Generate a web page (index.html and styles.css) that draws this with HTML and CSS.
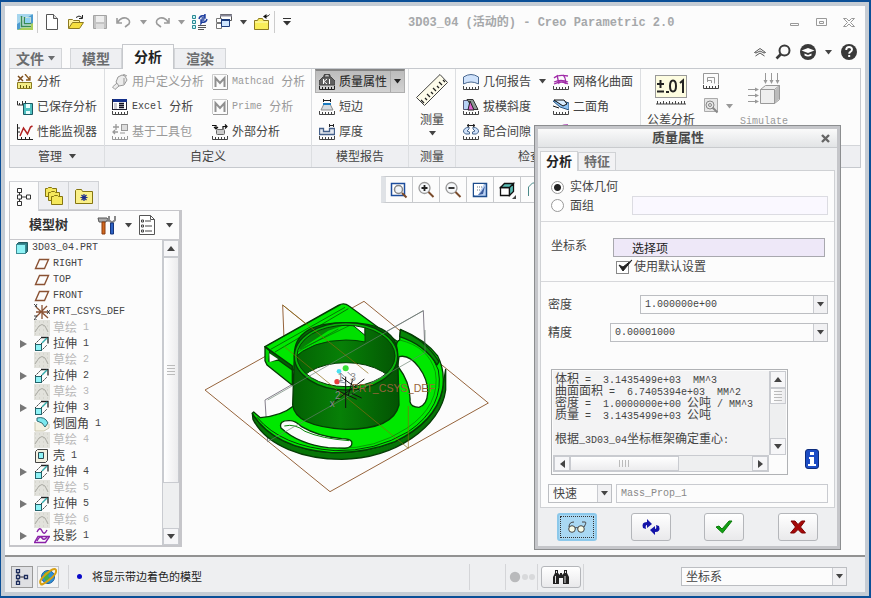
FILE: index.html
```html
<!DOCTYPE html>
<html lang="zh-CN">
<head>
<meta charset="utf-8">
<title>Creo Parametric 2.0</title>
<link rel="stylesheet" href="styles.css">
</head>
<body>
<svg class="defs" aria-hidden="true">
  <symbol id="down" viewBox="0 0 7 5"><path d="M0 0h7L3.500 4.500z" fill="currentColor"/></symbol>
  <symbol id="ticks" viewBox="0 0 16 16"><path d="M.5 12v3.500h15V12M3.500 13v2M6.500 13v2M9.500 13v2M12.500 13v2" fill="none" stroke="currentColor"/></symbol>
  <symbol id="sketch" viewBox="0 0 16 16"><rect width="16" height="16" fill="#e2e2dc"/><path d="M1 2h14M1 6h14M1 10h14M1 14h14" stroke="#c9c9c0" stroke-dasharray="1 3"/><path d="M1 12l4-6q3-3 6 0l3 6" fill="none" stroke="#a9a9a2"/></symbol>
  <symbol id="plane" viewBox="0 0 16 16"><path d="M5.500 3.500h9l-4 9h-9z" fill="none" stroke="#8a5233" stroke-width="1.400"/></symbol>
  <symbol id="extrude" viewBox="0 0 16 16"><path d="M1 8l6-6M7 15l6-6M7 8l6-6" stroke="#333" stroke-dasharray="2 1"/><path d="M7 1.500h7v6" fill="none" stroke="#222" stroke-width="1.300"/><path d="M8 7l5-5" stroke="#3aa" stroke-width="1.500"/><rect x="1.500" y="8.500" width="6" height="6" fill="#8ff3f6" stroke="#24646c"/></symbol>
  <symbol id="mathcad" viewBox="0 0 16 16"><path d="M.5 15V.5H15" fill="none" stroke="#ccc"/><path d="M15.500 1v14.500H1" fill="none" stroke="#999"/><path d="M3.500 13V4L8 9l4.500-5v9" fill="none" stroke="#909090" stroke-width="2"/></symbol>
</svg>

<div class="app">
  <header class="titlebar">
    <div class="quick">
      <button aria-label="Creo"><svg class="i16" viewBox="0 0 16 16"><rect width="16" height="16" rx="1" fill="#4d9bd0"/><path d="M0 0h16L0 10z" fill="#a6d6ee"/><path d="M0 16l16-7v7z" fill="#a9cf5b"/><rect x="3" y="3" width="11" height="11" fill="#e8f7e0" opacity=".7"/><path d="M4.500 2v10.500H14M7.500 3v6.500H14" fill="none" stroke="#378b54" stroke-width="1.500"/><rect x="8" y="4" width="5" height="5" fill="#8fd0f0"/></svg></button>
      <span class="sep"></span>
      <button aria-label="新建"><svg class="i16" viewBox="0 0 16 16"><path d="M2.500.5h7l4 4v11h-11z" fill="#fff" stroke="#555"/><path d="M9.500.5v4h4" fill="#ddd" stroke="#555"/></svg></button>
      <button aria-label="打开"><svg class="i16" viewBox="0 0 16 16"><path d="M.5 14V5.500h4l1 1h6V9" fill="#fff3a0" stroke="#8c7a20"/><path d="M.5 14.500l4-6h11l-4 6z" fill="#f6df3f" stroke="#8c7a20"/><path d="M8 3.500q3-3 6 0M14.500 1v3.500H11" fill="none" stroke="#222"/></svg></button>
      <button aria-label="保存"><svg class="i16" viewBox="0 0 16 16"><path d="M1.500 1.500h13v13h-13z" fill="#c4c4c4" stroke="#a4a4a4"/><rect x="4" y="2" width="8" height="6" fill="#eee"/><rect x="4" y="10" width="8" height="5" fill="#ddd"/></svg></button>
      <button aria-label="撤消"><svg class="i16" viewBox="0 0 16 16"><path d="M1 4v5h5M2 8q3-5 8-4 5 2 3 6l-4 3" fill="none" stroke="#9a9a9a" stroke-width="1.600"/></svg></button>
      <button class="drop pale" aria-label="撤消列表"><svg class="arrow"><use href="#down"/></svg></button>
      <button aria-label="重做"><svg class="i16" viewBox="0 0 16 16"><path d="M15 4v5h-5M14 8q-3-5-8-4-5 2-3 6l4 3" fill="none" stroke="#9a9a9a" stroke-width="1.600"/></svg></button>
      <button class="drop pale" aria-label="重做列表"><svg class="arrow"><use href="#down"/></svg></button>
      <button aria-label="重新生成"><svg class="i16" viewBox="0 0 16 16"><path d="M.5 1.500h3v3h-3zM.5 6.500h3v3h-3zM.5 11.500h3v3h-3z" fill="#c8f4f4" stroke="#2c8a95"/><path d="M6 11.500h8M6 13.500h8M6 15.500h6" stroke="#555"/><path d="M7 5q1-4 5-3l1-1.500V4H9.500M15 5q-1 4-5 3L9 9.500V6h3.500" fill="none" stroke="#1c3c9c" stroke-width="1.400"/></svg></button>
      <button aria-label="窗口"><svg class="i16" viewBox="0 0 16 16"><path d="M4.500.5h11v6h-11z" fill="#fff" stroke="#555"/><path d="M4 1.500h12" stroke="#889" stroke-width="2"/><path d="M.5 9.500h5v5h-5z" fill="#fff" stroke="#777"/><path d="M.5 4.500h5v4h-5z" fill="#fff" stroke="#777"/><path d="M5.500 5.500h8v7h-8z" fill="#cfe6ff" stroke="#1c3c7c"/><path d="M5 6h9" stroke="#1c3c7c" stroke-width="2"/></svg></button>
      <button class="drop" aria-label="窗口列表"><svg class="arrow"><use href="#down"/></svg></button>
      <button aria-label="关闭"><svg class="i16" viewBox="0 0 16 16"><path d="M.5 15.500v-9h3l1-2h4l1 2h5v9z" fill="#f9ee58" stroke="#8c7a20"/><path d="M1 8h13" stroke="#fffbc0"/><path d="M9 2.500L12.500 0v5z" fill="#111"/><path d="M12 2.500q3-.5 3.500-2" fill="none" stroke="#111"/></svg></button>
      <span class="sep"></span>
      <button class="custom" aria-label="自定义快速访问工具栏"><svg viewBox="0 0 8 8" width="8" height="8"><path d="M0 .5h8" stroke="#333"/><path d="M0 3h8L4 7.500z" fill="#333"/></svg></button>
    </div>
    <h1><span class="en">3D03_04 (</span>活动的<span class="en">) - Creo Parametric 2.0</span></h1>
    <div class="winctl">
      <button aria-label="最小化"><svg viewBox="0 0 12 11" width="12" height="11"><path d="M1.500 6.500h8v2h-8z" fill="none" stroke="#999"/></svg></button>
      <button aria-label="最大化"><svg viewBox="0 0 12 11" width="12" height="11"><path d="M.5 1.500h10v7H.5zM3.500 4.500h4v2h-4z" fill="none" stroke="#999"/></svg></button>
      <button aria-label="关闭窗口"><svg viewBox="0 0 12 11" width="12" height="11"><path d="M.5 1.500h3L6 4l2.500-2.500h3L7.500 5.500l4 4h-3L6 7 3.500 9.500h-3l4-4z" fill="none" stroke="#999"/></svg></button>
    </div>
  </header>

  <nav class="tabrow">
    <button class="tab file">文件<svg class="arrow"><use href="#down"/></svg></button>
    <button class="tab">模型</button>
    <button class="tab active">分析</button>
    <button class="tab">渲染</button>
    <div class="utils">
      <button aria-label="最小化功能区"><svg viewBox="0 0 12 10" width="12" height="10"><path d="M.5 5.500l5.500-4 5.500 4-1.500.5-4-2-4 2zM1.500 9L6 6l4.500 3" fill="none" stroke="#555"/></svg></button>
      <button aria-label="搜索"><svg viewBox="0 0 16 16" width="16" height="16"><circle cx="9.500" cy="6.500" r="5" fill="none" stroke="#3a3a3a" stroke-width="2"/><path d="M6 10l-4.500 4.500" stroke="#3a3a3a" stroke-width="2.600"/></svg></button>
      <button aria-label="学习"><svg viewBox="0 0 16 16" width="16" height="16"><circle cx="8" cy="8" r="8" fill="#3a3a3a"/><path d="M1.500 6.500L8 4l6.500 2.500L8 9z" fill="#fff"/><path d="M4.500 9.500v2q3.500 2 7 0v-2L8 11z" fill="#fff"/></svg></button>
      <button aria-label="学习列表"><svg class="arrow"><use href="#down"/></svg></button>
      <button aria-label="帮助"><svg viewBox="0 0 16 16" width="16" height="16"><circle cx="8" cy="8" r="8" fill="#3a3a3a"/><path d="M5.200 6q0-3 2.900-3 2.900 0 2.900 2.600 0 1.500-1.600 2.300-1.200.6-1.200 1.800" fill="none" stroke="#fff" stroke-width="1.900"/><path d="M7.200 11h2v2h-2z" fill="#fff"/></svg></button>
    </div>
  </nav>

  <section class="ribbon">
    <div class="group">
      <div class="cmds">
        <button class="cmd"><svg class="i16" viewBox="0 0 16 16"><path d="M1 2l5 5M6 2L1 7" stroke="#7a4a1a" stroke-width="1.500"/><path d="M8 0l5 6M13 2v4H9" fill="none" stroke="#8a5a20" stroke-width="1.300"/><path d="M.5 8.500h14v6H.5z" fill="#f3ec85" stroke="#8a7a20"/><path d="M3.500 11v3M6.500 12v2M9.500 11v3M12.500 12v2" stroke="#665a10"/></svg>分析</button>
        <button class="cmd"><svg class="i16" viewBox="0 0 16 16"><path d="M.5 2v4h7M2.500 4v2M5.500 2v4M8.500 2v2" fill="none" stroke="#333"/><path d="M6.500 4.500h9v11h-9z" fill="#4fc0c0" stroke="#1c5a64"/><path d="M9 5h4v4H9zM9 12h4v3H9z" fill="#e8ffff"/></svg>已保存分析</button>
        <button class="cmd"><svg class="i16" viewBox="0 0 16 16"><path d="M.5 0v15.500H16M1 4h2M1 8h2M4.500 13v2M8.500 13v2M12.500 13v2" fill="none" stroke="#222"/><path d="M3 12L6.500 4l4 6L13.500 3l2-1" fill="none" stroke="#b02020" stroke-width="1.500"/></svg>性能监视器</button>
      </div>
      <h2>管理<svg class="arrow"><use href="#down"/></svg></h2>
    </div>

    <div class="group">
      <div class="cmds two">
        <button class="cmd off"><svg class="i16" viewBox="0 0 16 16"><path d="M4 8l2-5 4-2 3 1 2 4-3 5-5 1zM5 9l-4.500 4 2.500 2.500L7 12M11 0l4 2M12 4v6" fill="#ececec" stroke="#999"/></svg>用户定义分析</button>
        <button class="cmd off"><svg class="i16"><use href="#mathcad"/></svg><span class="en">Mathcad</span> 分析</button>
        <button class="cmd"><svg class="i16" viewBox="0 0 16 16"><rect x=".5" y=".5" width="14" height="10" fill="#fff" stroke="#223"/><rect x="1" y="0" width="14" height="3" fill="#14308a"/><path d="M7 4.500h5M7 6.500h5M7 8.500h5" stroke="#112" stroke-width="1.500"/><path d="M2 5h3M2 7h3M2 9h3" stroke="#99a"/><use href="#ticks"/></svg><span class="en">Excel</span> 分析</button>
        <button class="cmd off"><svg class="i16"><use href="#mathcad"/></svg><span class="en">Prime</span> 分析</button>
        <button class="cmd off"><svg class="i16" viewBox="0 0 16 16"><path d="M1 3h6M4 0v6M1 8h5M3 6L1 8l2 2" fill="none" stroke="#999" stroke-width="1.300"/><rect x="9.500" y=".5" width="6" height="6" fill="#ddd" stroke="#999"/><path d="M8 9h5" stroke="#999"/><use href="#ticks"/></svg>基于工具包</button>
        <button class="cmd"><svg class="i16" viewBox="0 0 16 16"><path d="M0 1.500h4V5M2 3l2 2 2-2M11 5V2.500h4M13 .5l2 2-2 2" fill="none" stroke="#111" stroke-width="1.200"/><rect x="4.500" y="5.500" width="8" height="5" rx="1" fill="#ccc" stroke="#666"/><use href="#ticks"/></svg>外部分析</button>
      </div>
      <h2>自定义</h2>
    </div>

    <div class="group">
      <div class="cmds snug">
        <div class="split"><button class="cmd"><svg class="i16" viewBox="0 0 16 16"><path d="M5 3q0-3 3-3t3 3" fill="none" stroke="#444" stroke-width="1.500"/><path d="M4 3h8l4 4v4H0V7z" fill="#5f5f5f" stroke="#444"/><path d="M4.500 5v5M8 5L5 7.500 8 10M10.500 5v5" fill="none" stroke="#fff"/><use href="#ticks"/></svg>质量属性</button><button class="more" aria-label="质量属性列表"><svg class="arrow"><use href="#down"/></svg></button></div>
        <button class="cmd"><svg class="i16" viewBox="0 0 16 16"><path d="M4.500 0v3M11.500 0v3M5 1.500h6" stroke="#222"/><path d="M5 5h6l3 6H2z" fill="#d5dbe0" stroke="#888"/><path d="M4 5h8" stroke="#1c7cc0" stroke-width="2"/><use href="#ticks"/></svg>短边</button>
        <button class="cmd"><svg class="i16" viewBox="0 0 16 16"><path d="M10.500 0v3M14.500 0v3M11 1.500h3" stroke="#222"/><path d="M.5 4.500h4v3h6v-3h5v6H.5z" fill="#e4e8ee" stroke="#44608a" stroke-width="1.300"/><use href="#ticks"/></svg>厚度</button>
      </div>
      <h2>模型报告</h2>
    </div>

    <div class="group">
      <div class="cmds big">
        <button class="large"><svg viewBox="0 0 32 32" width="32" height="32"><path d="M.5 23.500L24 .5l7.500 8-23 23z" fill="#fdfbea" stroke="#444"/><path d="M8 29l-3-3M11 26l-2-2M14 23l-3-3M17 20l-2-2M20 17l-3-3M23 14l-2-2M26 11l-3-3M29 8l-2-2" stroke="#222" stroke-width="1.300"/></svg>测量<svg class="arrow"><use href="#down"/></svg></button>
      </div>
      <h2>测量</h2>
    </div>

    <div class="group">
      <div class="cmds inspect">
        <button class="cmd"><svg class="i16" viewBox="0 0 16 16"><path d="M.5 10V3Q8-2 15.500 3v7Q8 6 .5 10z" fill="#cfe2fb" stroke="#4a6890"/><use href="#ticks"/></svg>几何报告<svg class="arrow"><use href="#down"/></svg></button>
        <button class="cmd"><svg class="i16" viewBox="0 0 16 16"><path d="M1 4q4-4 14-2M1 8q7-3 14 0M4 1l2 9M10 1q4 4 2 9M1 10q8-4 14 0" fill="none" stroke="#a02ca8" stroke-width="1.300"/><use href="#ticks"/></svg>网格化曲面</button>
        <button class="cmd"><svg class="i16" viewBox="0 0 16 16"><path d="M.5 1.500h6v9h-6z" fill="#b7d2f5" stroke="#557"/><path d="M4 .5h6l5 10h-4z" fill="#8b9a94" stroke="#333"/><path d="M7 2l4 9H5z" fill="#e060d0" stroke="#222"/><use href="#ticks"/></svg>拔模斜度</button>
        <button class="cmd"><svg class="i16" viewBox="0 0 16 16"><path d="M0 2h10l6 2v7L7 8z" fill="#8fc4f5" stroke="#27527c"/><path d="M1 1h10l3 4-4 2zM0 7l6 2" fill="#d8edff" stroke="#111"/><use href="#ticks"/></svg>二面角</button>
        <button class="cmd"><svg class="i16" viewBox="0 0 16 16"><path d="M6 3q-6 1-5.500 5 1 3 6 2V8L4 7l2-2zM10 3q6 1 5.500 5-1 3-6 2V8l2.500-1-2-2z" fill="#cfe2fb" stroke="#4a6890"/><path d="M4 1.500h8M6 0L4 1.500 6 3M10 0l2 1.500L10 3" fill="none" stroke="#222"/><use href="#ticks"/></svg>配合间隙</button>
        <button class="cmd" aria-label="曲率"><svg class="i16" viewBox="0 0 16 16"><path d="M1 6q6-5 14-5" fill="none" stroke="#a02ca8" stroke-width="1.500"/></svg></button>
      </div>
      <h2 class="left">检查</h2>
    </div>

    <div class="group last">
      <div class="cmds tools">
        <button class="large"><svg viewBox="0 0 32 32" width="32" height="32"><rect x=".5" y="2.500" width="31" height="22" fill="#fdfce0" stroke="#999"/><path d="M2 11h7M5.500 7v8M2 18.500h7M11 19h3M18 7.500q-3 0-3 5.500t3 5.500 3-5.500-3-5.500M25 10l3-2.500V20" fill="none" stroke="#222" stroke-width="2"/><path d="M1 31h30M2.500 28v3M5.500 29v2M8.500 28v3M11.500 29v2M14.500 28v3M17.500 29v2M20.500 28v3M23.500 29v2M26.500 28v3M29.500 28v3" stroke="#444"/></svg>公差分析</button>
        <div class="minis">
          <button aria-label="灵敏度"><svg class="i16" viewBox="0 0 16 16"><path d="M.5 11V.5h15v11M4.500 9V4.500h7v6M8.500 10V7.500h-4" fill="none" stroke="#999"/><use href="#ticks"/></svg></button>
          <button aria-label="优化"><svg class="i16" viewBox="0 0 16 16"><path d="M1.500.5h13v13h-13z" fill="#e6e6e6" stroke="#aaa"/><circle cx="7" cy="7" r="4" fill="none" stroke="#888"/><circle cx="7" cy="7" r="1.500" fill="none" stroke="#888"/><path d="M9.500 9.500l5 5" stroke="#888" stroke-width="2"/></svg></button>
          <button class="pale" aria-label="优化列表"><svg class="arrow"><use href="#down"/></svg></button>
        </div>
        <button class="large off"><svg viewBox="0 0 32 34" width="32" height="34"><path d="M12.500 16.500h14v14h-14zM12.500 16.500l5-4h14l-5 4M31.500 12.500v14l-5 4z" fill="#eee" stroke="#999"/><path d="M27 17l4-4v13l-4 4z" fill="#bbb"/><path d="M17.500 0v9M23.500 0v9M29.500 0v9M0 16.500h9M0 22.500h9M0 28.500h9" stroke="#999"/><path d="M15.500 7h4l-2 4zM21.500 7h4l-2 4zM27.500 7h4l-2 4zM7 14.500v4l4-2zM7 20.500v4l4-2zM7 26.500v4l4-2z" fill="#999"/></svg><span class="en">Simulate</span></button>
      </div>
      <h2></h2>
    </div>
  </section>

  <main class="work">
    <aside class="side">
      <div class="sidetabs">
        <button class="on" aria-label="模型树"><svg viewBox="0 0 16 20" width="16" height="20"><path d="M3.500 5v10M5 10h6" stroke="#333"/><path d="M1.500 1.500h4v4h-4zM1.500 8h4v4h-4zM1.500 14.500h4v4h-4zM10.500 8h4v4h-4z" fill="#fff" stroke="#333"/></svg></button>
        <button aria-label="文件夹浏览器"><svg viewBox="0 0 20 20" width="20" height="20"><path id="fold" d="M1.500 10.500v-8h2l1-1h3l1 1h4v8z" fill="#f5e85c" stroke="#857510"/><use href="#fold" x="3" y="4"/><use href="#fold" x="6" y="8"/></svg></button>
        <button aria-label="收藏夹"><svg viewBox="0 0 18 16" width="18" height="16"><path d="M.5 15.500v-13l1-1h5l1 2h10v12z" fill="#faf088" stroke="#857510"/><path d="M9 6v7M5.500 9.500h7M6.500 7l5 5M11.500 7l-5 5" stroke="#1c2c8c" stroke-width="1.200"/></svg></button>
      </div>
      <div class="treebox">
        <div class="treehead">
          <h3>模型树</h3>
          <button aria-label="设置"><svg viewBox="0 0 20 20" width="20" height="20"><path d="M1 3h9l2 3H9v1H2z" fill="#aaa" stroke="#555"/><path d="M5 7h3v12H5z" fill="#d2691e" stroke="#8a3c10"/><path d="M12 1v4l2 2h2l2-2V1" fill="none" stroke="#888" stroke-width="2"/><path d="M13.500 8h3v11h-3z" fill="#2d62c4" stroke="#16357c"/></svg></button>
          <button aria-label="设置列表"><svg class="arrow"><use href="#down"/></svg></button>
          <button aria-label="显示"><svg viewBox="0 0 16 20" width="16" height="20"><path d="M.5.5h11l4 4v15H.5z" fill="#fff" stroke="#555"/><path d="M11.500.5v4h4" fill="none" stroke="#555"/><path d="M6 6h6M6 11h7M6 16h7" stroke="#444"/><path d="M2.500 5h2v2h-2zM2.500 10h2v2h-2zM2.500 15h2v2h-2z" fill="none" stroke="#444"/></svg></button>
          <button aria-label="显示列表"><svg class="arrow"><use href="#down"/></svg></button>
        </div>
        <div class="treebody">
          <ul>
            <li class="root"><svg class="i14" viewBox="0 0 14 14"><path d="M1.500 3.500l2-2h9v9l-2 2h-9z" fill="#2c7c84" stroke="#245a60"/><path d="M1.500 3.500h9v9h-9z" fill="#8ff3f6" stroke="#3c8c94"/></svg><span class="en">3D03_04.PRT</span></li>
            <li><svg class="i16"><use href="#plane"/></svg><span class="en">RIGHT</span></li>
            <li><svg class="i16"><use href="#plane"/></svg><span class="en">TOP</span></li>
            <li><svg class="i16"><use href="#plane"/></svg><span class="en">FRONT</span></li>
            <li><svg class="i16" viewBox="0 0 16 16"><path d="M8 1v14M2 3l12 11M13 2L2 13M2 8h13" stroke="#8a5233" stroke-width="1.300"/><path d="M0 0l3 3M3 0L1 3M13 6l3 4M16 6l-3 4M0 12h3l-3 4h3" fill="none" stroke="#444"/></svg><span class="en">PRT_CSYS_DEF</span></li>
            <li class="off"><svg class="i16"><use href="#sketch"/></svg>草绘 <span class="en">&nbsp;1</span></li>
            <li class="kids"><svg class="i16"><use href="#extrude"/></svg>拉伸 <span class="en">&nbsp;1</span></li>
            <li class="off"><svg class="i16"><use href="#sketch"/></svg>草绘 <span class="en">&nbsp;2</span></li>
            <li class="kids"><svg class="i16"><use href="#extrude"/></svg>拉伸 <span class="en">&nbsp;2</span></li>
            <li class="off"><svg class="i16"><use href="#sketch"/></svg>草绘 <span class="en">&nbsp;3</span></li>
            <li class="kids"><svg class="i16"><use href="#extrude"/></svg>拉伸 <span class="en">&nbsp;3</span></li>
            <li><svg class="i16" viewBox="0 0 16 16"><path d="M1 6v9h9l5-3V8" fill="#f3f1e2" stroke="#ccc8b0"/><path d="M3 2q8-2 11 5l-3 4Q9 6 3 5z" fill="#7ce8ee" stroke="#2c6c74"/></svg>倒圆角 <span class="en">&nbsp;1</span></li>
            <li class="off"><svg class="i16"><use href="#sketch"/></svg>草绘 <span class="en">&nbsp;4</span></li>
            <li><svg class="i16" viewBox="0 0 16 16"><path d="M1.500 3.500l2-2h10v11l-2 2h-10z" fill="#f3f1e2" stroke="#444"/><path d="M4.500 4.500h5v6h-5z" fill="#8ff3f6" stroke="#2c4c54"/></svg>壳 <span class="en">&nbsp;1</span></li>
            <li class="kids"><svg class="i16"><use href="#extrude"/></svg>拉伸 <span class="en">&nbsp;4</span></li>
            <li class="off"><svg class="i16"><use href="#sketch"/></svg>草绘 <span class="en">&nbsp;5</span></li>
            <li class="kids"><svg class="i16"><use href="#extrude"/></svg>拉伸 <span class="en">&nbsp;5</span></li>
            <li class="off"><svg class="i16"><use href="#sketch"/></svg>草绘 <span class="en">&nbsp;6</span></li>
            <li class="kids"><svg class="i16" viewBox="0 0 16 16"><path d="M3 4q3-6 5-1t5-1M4 8.500h11.500l-4 6H.5zM3 13q3-6 5-3t5-1" fill="none" stroke="#8a22a8" stroke-width="1.400"/></svg>投影 <span class="en">&nbsp;1</span></li>
          </ul>
          <div class="vbar"><span class="cap up"></span><span class="thumb tall"><i></i></span><span class="cap down"></span></div>
        </div>
      </div>
    </aside>

    <section class="view">
      <div class="viewbar">
        <button aria-label="重新调整"><svg viewBox="0 0 18 18" width="18" height="18"><path d="M1.500 14.500v-12h13v12z" fill="#fff" stroke="#1c4c9c" stroke-width="1.500"/><circle cx="8.500" cy="8.500" r="4" fill="#f2f6fa" stroke="#888" stroke-width="1.500"/><path d="M12 12l4.500 4.500" stroke="#7a4a2a" stroke-width="2"/></svg></button>
        <button aria-label="放大"><svg viewBox="0 0 18 18" width="18" height="18"><circle cx="7.500" cy="7" r="5.500" fill="#f6f8fa" stroke="#999" stroke-width="1.300"/><path d="M11.500 11l5 5" stroke="#7a4a2a" stroke-width="2"/><path d="M4.500 7h6M7.500 4v6" stroke="#222" stroke-width="1.800"/></svg></button>
        <button aria-label="缩小"><svg viewBox="0 0 18 18" width="18" height="18"><circle cx="7.500" cy="7" r="5.500" fill="#f6f8fa" stroke="#999" stroke-width="1.300"/><path d="M11.500 11l5 5" stroke="#7a4a2a" stroke-width="2"/><path d="M4.500 7h6" stroke="#222" stroke-width="1.800"/></svg></button>
        <button aria-label="重画"><svg viewBox="0 0 18 18" width="18" height="18"><path d="M2.500 2.500h13v13h-13z" fill="#b9d0f2" stroke="#1c4c8c" stroke-width="1.500"/><path d="M3 3h10l-6 11H3z" fill="#fff"/><path d="M14 5l-4 6-3 3 5-1z" fill="#3c5c9c"/><path d="M6 6h5M6 9h3" stroke="#678" stroke-dasharray="1 1"/></svg></button>
        <button aria-label="显示样式"><svg viewBox="0 0 18 18" width="18" height="18"><path d="M2.500 6.500h9v8h-9z" fill="#fff" stroke="#111" stroke-width="1.300"/><path d="M2.500 6.500l4-4h9l-4 4zM15.500 2.500v8l-4 4v-8z" fill="#59bdb4" stroke="#111" stroke-width="1.300"/><path d="M18 14v4h-4z" fill="#444"/></svg></button>
        <button aria-label="已保存方向"><svg viewBox="0 0 18 18" width="18" height="18"><path d="M3.500 15V6l4-4h8" fill="none" stroke="#4b8a8a"/></svg></button>
      </div>
      <svg class="model" viewBox="0 0 900 630" width="300" height="210">
        <defs>
          <linearGradient id="wall"><stop offset="0" stop-color="#036003"/><stop offset=".45" stop-color="#078007"/><stop offset="1" stop-color="#035303"/></linearGradient>
          <clipPath id="hole"><ellipse cx="453" cy="198" rx="147" ry="92"/></clipPath>
        </defs>
        <path d="M30 300L507 34 880 339 405 605z" fill="none" stroke="#96643c" stroke-width="3"/>
        <path d="M263 45l5 125M263 45l160 130" fill="none" stroke="#96643c" stroke-width="3"/>
        <path d="M685 62l5 126M685 62L520 155M218 455L210 330l80-46" fill="none" stroke="#85808c" stroke-width="3"/>
        <g stroke="#053b05" stroke-width="4" stroke-linejoin="round">
          <path d="M172 370L174 388C215 470 330 508 440 508 600 506 738 410 752 300V238L742 300Q722 395 600 455 510 490 410 488 235 474 172 370z" fill="#067506"/>
          <path fill-rule="evenodd" d="M176 366L196 383Q262 376 292 350L420 250 600 200 606 155 614 150 616 118Q690 148 728 198Q752 245 742 300Q722 395 600 455Q510 490 410 488Q235 474 172 370zM612 200Q642 192 672 232Q700 270 698 310Q696 345 672 352Q648 352 645 335Q648 280 608 228zM286 392Q250 390 258 414Q310 462 400 473L450 475Q474 473 470 455Q464 446 440 446Q370 440 320 410Q300 392 286 392z" fill="#00e800"/>
          <path d="M268 408Q300 400 330 424 380 446 462 452" fill="none" stroke="#078507" stroke-width="3"/>
          <path d="M617 128Q705 165 730 240Q750 350 640 425Q540 485 420 482Q260 470 186 382" fill="none" stroke-width="3"/>
          <path d="M614 150Q700 170 721 245Q738 345 635 415Q540 478 430 474" fill="none" stroke="#077507" stroke-width="2"/>
          <path d="M617 120Q692 150 732 215L726 225Q690 165 614 140z" fill="#078507"/>
          <path d="M210 170L430 46Q447 36 462 48L608 155 560 210 294 240z" fill="#00e800"/>
          <path d="M218 166L438 44M240 186L460 56M227 178L450 52" fill="none" stroke-width="2"/>
          <path d="M210 170L292 236V286L216 225 210 212z" fill="#00da00"/>
          <path d="M210 170L224 182 222 214 250 210 292 240 292 228z" fill="#045c04"/>
          <path d="M223 190L250 208 224 216z" fill="#fcfcfc" stroke="none"/>
        </g>
        <path d="M298 195Q298 98 453 98 608 98 608 195L612 345Q595 418 453 418 300 410 293 345z" fill="url(#wall)" stroke="#053b05" stroke-width="4"/>
        <ellipse cx="453" cy="199" rx="155" ry="101" fill="#07b407" stroke="#053b05" stroke-width="4"/>
        <g clip-path="url(#hole)">
          <path d="M290 90h330v220H290z" fill="#00e000"/>
          <path d="M320 150Q390 100 470 98L400 122 312 180z" fill="#078007"/>
          <path d="M474 106h36v30z" fill="#fcfcfc" stroke="#053b05" stroke-width="3"/>
          <path d="M290 210Q350 150 453 150 485 150 510 156V100H620V320H290z" fill="url(#wall)" stroke="#053b05" stroke-width="3"/>
          <ellipse cx="453" cy="310" rx="155" ry="92" fill="#fcfcfc" stroke="#053b05" stroke-width="3"/>
          <path d="M300 190l130-73M315 178l150-72" stroke="#076007" stroke-width="2"/>
        </g>
        <ellipse cx="453" cy="198" rx="147" ry="92" fill="none" stroke="#053b05" stroke-width="3"/>
        <path d="M268 170L640 475V348M263 45L520 250" fill="none" stroke="#8a6a10" stroke-width="2"/>
        <path d="M685 62L218 330M690 188L218 455M690 188V120" fill="none" stroke="#68806e" stroke-width="2"/>
        <path d="M452 260v94M405 345l103-78M425 300l60 28M470 310l30 14M440 262l55 40M474 265l-14 50" stroke="#111" stroke-width="3"/>
        <circle cx="452" cy="235" r="9" fill="#38e038"/><circle cx="432" cy="244" r="7" fill="#48e0f0"/><circle cx="426" cy="275" r="8" fill="#e83c3c"/>
        <path d="M458 246l12 12M437 249l12 12M432 275l20 4" stroke="#789" stroke-width="3"/>
        <g class="axis"><text x="428" y="272">1</text><text x="466" y="272">3</text><text x="420" y="328">2</text><text x="404" y="352">x</text></g>
        <text class="csys" x="470" y="307">PRT_CSYS_DEF</text>
      </svg>
    </section>
  </main>

  <footer class="status">
    <button class="sq on" aria-label="导航器"><svg viewBox="0 0 14 16" width="14" height="16"><path d="M3 3v10M4 8h7" stroke="#223"/><path d="M1.500.5h3v3h-3zM1.500 6.500h3v3h-3zM1.500 12.500h3v3h-3zM9.500 6.500h3v3h-3z" fill="#fff" stroke="#1c2c5c" stroke-width="1.300"/></svg></button>
    <button class="sq" aria-label="浏览器"><svg viewBox="0 0 18 18" width="18" height="18"><circle cx="9" cy="9" r="6.500" fill="#2d8fd8" stroke="#1c5c9c"/><path d="M5 5q4-3 6 0l-2 3 3 3-4 4-3-5z" fill="#46b048"/><path d="M2 16Q-1 13 7 6T17 2q1 4-7 10T2 16z" fill="none" stroke="#d8a012" stroke-width="2"/></svg></button>
    <span class="msg"><i class="dot"></i>将显示带边着色的模型</span>
    <span class="cell"></span>
    <span class="cell lamps"><svg viewBox="0 0 28 12" width="28" height="12"><circle cx="6" cy="6" r="5.200" fill="#b9babc"/><circle cx="16" cy="6" r="3" fill="#d8d9db"/><circle cx="23" cy="6" r="3" fill="#d8d9db"/></svg></span>
    <span class="cell find"><button class="btn" aria-label="查找"><svg viewBox="0 0 18 16" width="18" height="16"><path d="M3 1h3v3l2 2V4h2v2l2-2V1h3v3l2 4v7h-6V9H7v6H1V8l2-4z" fill="#222"/><path d="M3.500 7v7M13 7v7M4.500 2v2M13.500 2v2" stroke="#ddd"/></svg></button></span>
    <div class="combo filter"><select aria-label="选择过滤器"><option>坐标系</option></select><span class="knob"><svg class="arrow"><use href="#down"/></svg></span></div>
  </footer>

  <section class="dialog" role="dialog" aria-labelledby="dlgname">
    <header><h2 id="dlgname">质量属性</h2><button aria-label="关闭对话框"><svg viewBox="0 0 9 9" width="9" height="9"><path d="M1 1l7 7M8 1L1 8" stroke="#666" stroke-width="2.400"/></svg></button></header>
    <div class="dtabs"><button class="on">分析</button><button>特征</button></div>
    <div class="panel">
      <div class="block kind">
        <label><input type="radio" name="kind" checked>实体几何</label>
        <div class="row"><label><input type="radio" name="kind">面组</label><input class="field faint" type="text" aria-label="面组"></div>
      </div>
      <div class="block ref">
        <label for="csys">坐标系</label>
        <div><input id="csys" class="field pick" type="text" value="选择项"><label class="check"><input type="checkbox" checked><svg viewBox="0 0 16 14" width="16" height="14"><path d="M2 6l4 6L15 1 6 8z" fill="#222" stroke="#222"/></svg>使用默认设置</label></div>
      </div>
      <div class="row dens"><label for="dens">密度</label><div class="combo"><select id="dens" class="en"><option>1.000000e+00</option></select><span class="knob"><svg class="arrow"><use href="#down"/></svg></span></div></div>
      <div class="row prec"><label for="prec">精度</label><div class="combo"><select id="prec" class="en"><option>0.00001000</option></select><span class="knob"><svg class="arrow"><use href="#down"/></svg></span></div></div>
      <div class="row out">
        <div class="result">
          <div class="resbody">
            <pre>体积<span class="en"> =  3.1435499e+03  MM^3</span>
曲面面积<span class="en"> =  6.7405394e+03  MM^2</span>
密度<span class="en"> =  1.0000000e+00 </span>公吨<span class="en"> / MM^3</span>
质量<span class="en"> =  3.1435499e+03 </span>公吨

根据<span class="en">_3D03_04</span>坐标框架确定重心<span class="en">:</span></pre>
            <div class="vbar"><span class="cap up"></span><span class="thumb short"><i></i></span><span class="cap down"></span></div>
          </div>
          <div class="hbar"><span class="cap prev"></span><span class="thumb"><i></i></span><span class="cap next"></span></div>
        </div>
        <button class="info" aria-label="信息"><svg viewBox="0 0 14 20" width="14" height="20"><rect x=".5" y=".5" width="13" height="19" rx="2.500" fill="#1c4cc4" stroke="#0c2c7c"/><path d="M5 3h4v3H5zM4 8h5v7h2v2H3v-2h2v-5H4z" fill="#fff"/></svg></button>
      </div>
      <div class="row name">
        <div class="combo mode"><select aria-label="模式"><option>快速</option></select><span class="knob"><svg class="arrow"><use href="#down"/></svg></span></div>
        <input class="field en" type="text" value="Mass_Prop_1" aria-label="名称">
      </div>
    </div>
    <div class="actions">
      <button class="btn focus" aria-label="预览"><svg viewBox="0 0 20 12" width="20" height="12"><circle cx="5" cy="8" r="3.300" fill="#f6fce8" stroke="#444"/><circle cx="14" cy="8" r="3.300" fill="#f6fce8" stroke="#444"/><path d="M8 7q1.500-1 3 0M2 6q0-5 5-5M17 6q3-5 1-5h-3" fill="none" stroke="#444"/></svg></button>
      <button class="btn" aria-label="重复"><svg viewBox="0 0 20 16" width="20" height="16"><path d="M2 9Q0 3 6 3V0l5 5-5 4V6Q4 6 5 10zM18 7q2 6-4 6v3l-5-5 5-4v3q2 0 1-4z" fill="#1212a8"/></svg></button>
      <button class="btn" aria-label="确定"><svg viewBox="0 0 18 14" width="18" height="14"><path d="M1 7l3-1 3 3 7-8h3L7.500 13z" fill="#12a012" stroke="#0a7a0a"/></svg></button>
      <button class="btn" aria-label="取消"><svg viewBox="0 0 16 14" width="16" height="14"><path d="M1 1h4l3 3.500L11.500 1H15l-4.500 6 5 6h-4L8 9.500 4.500 13h-4l5-6z" fill="#a80808" stroke="#7a0000"/></svg></button>
    </div>
  </section>
</div>
</body>
</html>
```
FILE: styles.css
```css
* { box-sizing: border-box; }

body {
  margin: 0;
  border: solid #0b4f97;
  border-width: 2px 2px 2px 1px;
  background: #0b4f97;
  color: #444;
  font: 12px/16px "Liberation Sans", "Noto Sans CJK SC", sans-serif;
}

h1, h2, h3, ul, pre { margin: 0; padding: 0; font-size: 12px; }

button {
  padding: 0;
  border: 0;
  background: none;
  color: inherit;
  font: inherit;
  display: flex;
  align-items: center;
  justify-content: center;
}

input, select { font: inherit; color: inherit; margin: 0; border-radius: 0; }
svg { display: block; flex: none; }
.defs { position: absolute; width: 0; height: 0; }
.en { font-family: "Liberation Mono", "Noto Sans CJK SC", monospace; font-size: 10px; }
.i16 { width: 16px; height: 16px; }
.i14 { width: 14px; height: 14px; }
.arrow { width: 7px; height: 5px; }
.pale { color: #999; }
.off { color: #999; }

.app {
  position: relative;
  min-height: calc(100vh - 4px);
  display: flex;
  flex-direction: column;
  border: 4px solid #c5ccd4;
  background: #fcfcfc;
}

/* Title bar */
.titlebar {
  display: grid;
  grid-template-columns: 395px 1fr auto;
  align-items: center;
  height: 38px;
  padding: 0 8px 6px;
}
.quick { display: flex; align-items: center; height: 24px; }
.quick button { width: 24px; height: 24px; }
.quick .drop { width: 14px; }
.quick .sep { width: 1px; height: 22px; margin-right: 2px; background: #ccc; }
.quick .custom { width: 20px; }
.titlebar h1 { color: #a6a8aa; font-weight: bold; white-space: pre; }
.titlebar h1 .en { font-size: 12px; }
.winctl { display: flex; gap: 15px; padding-right: 2px; }

/* Ribbon tabs */
.tabrow { display: flex; align-items: flex-end; height: 24px; padding: 0 4px; }
.tab {
  width: 52px;
  height: 20px;
  border: 1px solid #d3d5d8;
  border-bottom: 0;
  background: #eeeff2;
  color: #6a6c6e;
  font-size: 14px;
  font-weight: bold;
}
.tab.file { width: 53px; gap: 4px; margin-right: 8px; }
.tab.active { height: 25px; margin-bottom: -1px; background: #fcfcfc; color: #222; border-color: #c6c8cc; z-index: 1; }
.utils { display: flex; align-items: center; gap: 9px; height: 16px; margin: 0 4px 0 auto; align-self: flex-start; }

/* Ribbon */
.ribbon {
  display: grid;
  grid-template-columns: 95px 207px 97px 47px 185px 1fr;
  margin: 0 4px;
  height: 100px;
  border: 1px solid #c6c9ce;
}
.group { display: flex; flex-direction: column; border-right: 1px solid #dcdee1; min-width: 0; }
.group.last { border-right: 0; }
.group h2 {
  display: flex;
  align-items: center;
  justify-content: center;
  gap: 7px;
  height: 22px;
  border-top: 1px solid #d3d5d9;
  background: #eeeff2;
  font-weight: normal;
}
.group h2.left { justify-content: flex-start; padding-left: 62px; }
.cmds { flex: 1; display: grid; grid-auto-rows: 25px; padding-left: 7px; align-content: start; }
.cmds.two { grid-template-columns: 100px 1fr; }
.cmds.snug { padding-left: 3px; }
.cmds.snug > .cmd { padding-left: 4px; }
.cmds.inspect { grid-template-columns: 90px 1fr; }
.cmd { justify-content: flex-start; gap: 4px; white-space: pre; }
.cmd .arrow { margin-left: 4px; }
.split {
  display: flex;
  width: 90px;
  height: 24px;
  border: 1px solid #aeaeae;
  border-top: 2px solid #858585;
  background: linear-gradient(#bcbcbc, #d2d2d2);
  color: #222;
}
.split .cmd { flex: 1; padding-left: 3px; }
.split .more { width: 14px; border-left: 1px solid #aaa; }
.cmds.big { display: block; padding: 5px 0 0; }
.large { flex-direction: column; gap: 7px; width: 48px; }
.cmds.big .large { width: 46px; gap: 6px; }
.large .arrow { margin-top: -3px; }
.cmds.tools { display: flex; gap: 8px; align-items: flex-start; padding: 4px 0 0 6px; }
.minis { display: grid; grid-template-columns: 16px 12px; gap: 9px 4px; width: 29px; }
.minis button:nth-child(2) { grid-row: 2; }
.minis button:nth-child(3) { grid-row: 2; }

/* Work area */
.work { flex: 1; display: flex; min-height: 0; }
.side { width: 173px; margin: 13px 0 8px 4px; display: flex; flex-direction: column; }
.sidetabs { display: flex; height: 30px; margin-bottom: -1px; z-index: 1; }
.sidetabs button { width: 30px; height: 29px; border: 1px solid #d0d2d6; border-left: 0; background: #eeeff2; }
.sidetabs .on { height: 30px; border-left: 1px solid #c8c8cc; border-bottom: 0; background: #fcfcfc; }
.treebox { border: 1px solid #c6c6ca; border-width: 1px 3px 2px 1px; }
.treehead { display: flex; align-items: center; height: 29px; border-bottom: 1px solid #c8c8cc; padding-left: 19px; }
.treehead h3 { flex: 1; font-size: 13px; color: #333; }
.treehead button:nth-of-type(2) { width: 22px; }
.treehead button:nth-of-type(4) { width: 20px; margin-left: 4px; }
.treebody { display: flex; height: 305px; overflow: hidden; }
.treebody ul { flex: 1; list-style: none; }
.treebody li { position: relative; display: flex; align-items: center; height: 16px; padding-left: 24px; white-space: nowrap; }
.treebody li svg { margin-right: 3px; }
.treebody li.root { padding-left: 5px; }
.treebody li.off { color: #b7b7b7; }
.kids::before { content: ""; position: absolute; left: 10px; border: 4px solid transparent; border-left: 7px solid #777; border-right: 0; }

/* Scroll bars */
.vbar { width: 17px; display: flex; flex-direction: column; background: #eeeff0; border-left: 1px solid #c9cbd0; }
.hbar { display: flex; width: 216px; height: 17px; background: #eeeff0; border: 1px solid #c9cbd0; }
.cap { display: grid; place-items: center; height: 17px; width: 16px; background: #f6f6f8; border: 1px solid #c9cbd0; }
.hbar .cap { height: 15px; }
.cap::before { content: ""; border: 4px solid transparent; }
.cap.up::before { border-bottom: 5px solid #444; border-top: 0; }
.cap.down::before { border-top: 5px solid #444; border-bottom: 0; }
.cap.prev::before { border-right: 5px solid #444; border-left: 0; }
.cap.next::before { border-left: 5px solid #444; border-right: 0; }
.cap.down { margin-top: auto; }
.cap.next { margin-left: auto; }
.thumb { display: grid; place-items: center; border: 1px solid #c9cbd0; background: linear-gradient(90deg, #fff, #ececee); }
.thumb.tall { height: 226px; }
.thumb.short { height: 16px; }
.vbar .thumb i { width: 8px; height: 11px; background: repeating-linear-gradient(#bbb 0 1px, transparent 1px 3px); }
.hbar .thumb { width: 109px; background: linear-gradient(#fff, #ececee); }
.hbar .thumb i { width: 11px; height: 7px; background: repeating-linear-gradient(90deg, #bbb 0 1px, transparent 1px 3px); }

/* Graphics area */
.view { flex: 1; padding: 8px 0 0 13px; min-width: 0; }
.viewbar { display: flex; width: 170px; height: 27px; margin-left: 186px; border: 1px solid #c8cacd; border-left: 5px solid #dfe2e6; }
.viewbar button { width: 27px; border-right: 1px solid #c8cacd; }
.model { margin-top: 87px; }
.axis { fill: #888; font: 30px "Liberation Sans", sans-serif; }
.csys { fill: #96643c; font: 32px "Liberation Sans", sans-serif; }

/* Status bar */
.status {
  display: flex;
  align-items: center;
  height: 37px;
  padding: 4px 18px 0 6px;
  border-top: 2px solid #929292;
  background: #eeeff1;
}
.sq { width: 22px; height: 22px; margin-right: 4px; border: 1px solid #c2c4c8; background: #f4f4f4; }
.sq.on { border-color: #999; background: #dfe0e3; }
.msg { display: flex; align-items: center; flex: 1; height: 24px; margin-left: 5px; padding-left: 8px; border-left: 1px solid #d4d5d8; font-size: 11px; color: #222; }
.dot { width: 5px; height: 5px; margin-right: 10px; border-radius: 50%; background: #0808c8; }
.cell { display: flex; align-items: center; width: 36px; height: 26px; border-left: 1px solid #d4d5d8; }
.cell.lamps { width: 32px; padding-left: 3px; }
.cell.find { width: 47px; padding-left: 3px; border-right: 1px solid #d4d5d8; margin-right: 97px; }
.btn { width: 40px; height: 28px; border: 1px solid #b4b6ba; border-radius: 3px; background: linear-gradient(#fff, #e9e9eb); }
.find .btn { height: 22px; }

.combo { display: flex; height: 19px; border: 1px solid #bcbec2; background: #fcfcfc; }
.combo select { flex: 1; min-width: 0; padding: 0 4px; border: 0; background: none; appearance: none; }
.combo select.en, .field.en { font-size: 10px; }
.knob { display: grid; place-items: center; width: 14px; border-left: 1px solid #c9cbd0; background: #f1f1f3; pointer-events: none; }
.filter { width: 166px; }

/* Mass properties dialog */
.dialog {
  position: absolute;
  top: 119px;
  right: 24px;
  width: 307px;
  padding: 3px;
  border: 1px solid #8c8e90;
  background: #eeeff1;
  box-shadow: inset 0 0 0 3px #c5c6ca;
}
.dialog header { display: flex; align-items: center; height: 19px; padding: 0 7px; border-bottom: 1px solid #c9cbce; background: linear-gradient(#fafafa, #e2e4e6); }
.dialog header h2 { flex: 1; padding-right: 10px; text-align: center; font-size: 13px; color: #4a4a4a; }
.dtabs { display: flex; align-items: flex-end; height: 22px; padding-left: 2px; }
.dtabs button { width: 38px; height: 18px; border: 1px solid #d0d2d5; border-bottom: 0; background: #f2f2f4; font-size: 13px; font-weight: bold; color: #6c6c6c; }
.dtabs .on { height: 20px; margin-bottom: -1px; background: #fcfcfc; color: #222; z-index: 1; }
.panel { height: 338px; margin: 0 2px; border: 1px solid #cfd1d4; background: #fcfcfc; }
.row { display: flex; align-items: center; }
.block { border-bottom: 1px solid #d7d8db; }
.kind { height: 51px; padding: 7px 6px 0 10px; }
.kind label { display: flex; align-items: center; height: 18px; gap: 6px; }
.kind input[type=radio] { appearance: none; width: 13px; height: 13px; border: 1px solid #999; border-radius: 50%; background: #fff; }
.kind input[type=radio]:checked { background: radial-gradient(#222 0 3px, #fff 4px); }
.kind .field { width: 196px; margin-left: auto; }
.field { height: 19px; padding: 0 4px; border: 1px solid #c9cbd0; background: #fcfcfc; min-width: 0; outline: 0; }
.field.faint { border-color: #dcdce2; background: #faf8ff; }
.field.pick { display: block; width: 212px; padding-left: 18px; border-color: #a8a8ae; background: #eee8f8; color: #222; }
.ref { display: flex; justify-content: space-between; height: 60px; padding: 16px 9px 0 10px; }
.check { position: relative; display: flex; align-items: center; gap: 5px; height: 20px; padding-left: 3px; }
.check input { appearance: none; width: 13px; height: 13px; border: 1px solid #888; background: #fff; }
.check svg { position: absolute; left: 4px; top: 2px; }
.dens, .prec { justify-content: space-between; padding: 0 6px 0 7px; }
.dens { margin-top: 13px; }
.prec { margin-top: 9px; }
.dens .combo { width: 188px; }
.prec .combo { width: 218px; }
.out { margin: 27px 15px 0 10px; justify-content: space-between; align-items: flex-end; }
.result { width: 237px; height: 106px; padding: 1px; border: 1px solid #b0b2b5; background: #fcfcfc; }
.resbody { display: flex; height: 84px; background: #f3f3f4; }
.resbody pre { flex: 1; padding: 2px 0 0 2px; font: 12px/12px "Liberation Sans", "Noto Sans CJK SC", sans-serif; }
.resbody pre .en { line-height: 1px; }
.info { margin-bottom: 6px; }
.name { margin: 9px 6px 0 7px; gap: 4px; }
.mode { width: 64px; }
.name .field { flex: 1; color: #888; }
.actions { display: flex; justify-content: space-between; padding: 5px 19px 5px; }
.btn.focus { border: 2px solid #8cc8ea; background: #a9d8f3; outline: 1px dotted #333; outline-offset: -4px; }
```
